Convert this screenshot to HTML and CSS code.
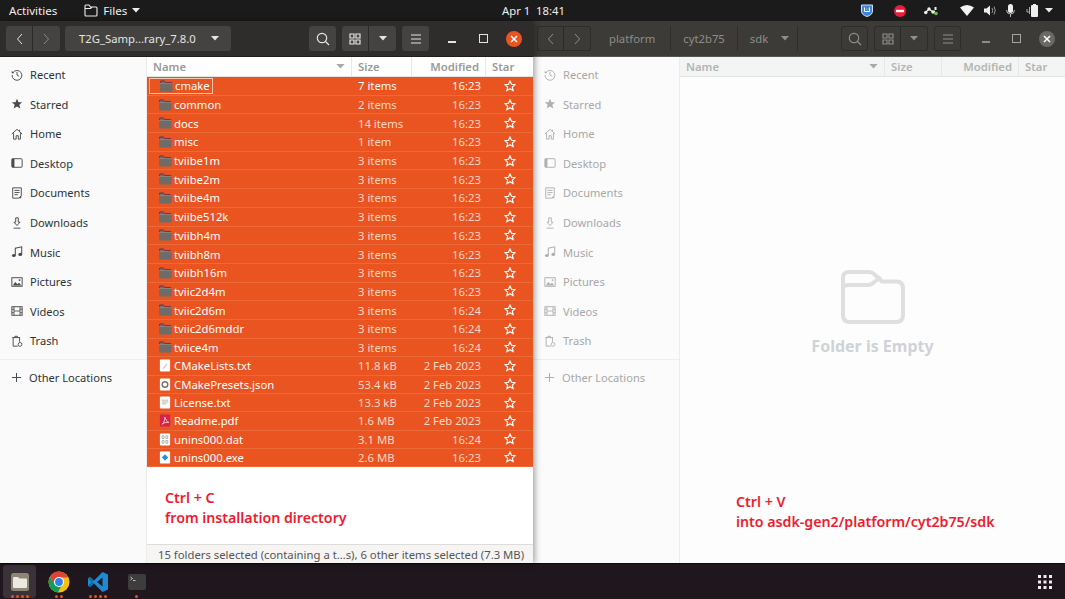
FILE: index.html
```html
<!DOCTYPE html>
<html lang="en">
<head>
  <meta charset="UTF-8" />
  <title>Files</title>
  <link rel="stylesheet" href="styles.css">
</head>
<body>
  <svg class="defs" width="0" height="0">
    <symbol id="i-folder" viewBox="0 0 14 14">
      <path d="M1 2.500q0-1 1-1h3.500l1.500 1.500h5q1.500 0 1.500 1v7.500q0 1-1 1H2q-1 0-1-1z" fill="#6f6b67"/>
      <path d="M1.500 4V2.500q0-.5.5-.5h3.300L6.800 3.500h6" fill="none" stroke="#8a2a3a"/>
      <rect x="1" y="4" width="12.500" height="1" fill="#85817d"/>
    </symbol>
    <symbol id="i-star" viewBox="0 0 12 12">
      <path d="M6 1l1.500 3.300 3.500.4-2.600 2.400.7 3.500L6 8.800 2.900 10.600l.7-3.500L1 4.700l3.500-.4z" fill="none" stroke="#fff" stroke-width="1.200"/>
    </symbol>
    <symbol id="i-caret" viewBox="0 0 10 6">
      <path d="M0 0h10L5 5.500z" fill="currentColor"/>
    </symbol>
    <symbol id="i-search" viewBox="0 0 14 14">
      <circle cx="6" cy="6" r="4.700" fill="none" stroke="currentColor" stroke-width="1.200"/>
      <path d="M9.500 9.500L13 13" stroke="currentColor" stroke-width="1.300"/>
    </symbol>
    <symbol id="i-grid" viewBox="0 0 12 12">
      <path d="M1 1h4v4H1zM7 1h4v4H7zM1 7h4v4H1zM7 7h4v4H7z" fill="none" stroke="currentColor" stroke-width="1.200"/>
    </symbol>
    <symbol id="i-menu" viewBox="0 0 12 10">
      <path d="M1 1h10M1 5h10M1 9h10" stroke="currentColor" stroke-width="1.100"/>
    </symbol>
    <symbol id="i-recent" viewBox="0 0 14 14">
      <path d="M2.300 4.200A5.700 5.700 0 1 1 1.300 7M7 3.500V7l2.500 1.500" fill="none" stroke="currentColor" stroke-width="1.100"/>
      <path d="M.8 2v3h3z" fill="currentColor"/>
    </symbol>
    <symbol id="i-starred" viewBox="0 0 14 14">
      <path d="M7 1l1.800 4h4.200l-3.300 2.800 1.200 4.400L7 9.800l-3.900 2.400 1.200-4.400L1 5h4.200z" fill="currentColor"/>
    </symbol>
    <symbol id="i-home" viewBox="0 0 14 14">
      <path d="M1 7l6-5.500L13 7M3 6v7h3V9h2.500v4H11V6M10 2v2" fill="none" stroke="currentColor" stroke-width="1.100"/>
    </symbol>
    <symbol id="i-desktop" viewBox="0 0 14 14">
      <rect x="1" y="2" width="12" height="10" rx="1" fill="none" stroke="currentColor" stroke-width="1.100"/>
      <rect x="1" y="2" width="3" height="10" fill="currentColor"/>
    </symbol>
    <symbol id="i-documents" viewBox="0 0 14 14">
      <path d="M2 1h10v9l-3 3H2zM4 4h6M4 6.500h6M4 9h4" fill="none" stroke="currentColor" stroke-width="1.100"/>
      <path d="M12 10v3H9z" fill="currentColor"/>
    </symbol>
    <symbol id="i-downloads" viewBox="0 0 14 14">
      <path d="M5.500 1h3v5h2L7 10 3.500 6h2zM3 13h8" fill="none" stroke="currentColor" stroke-width="1.100"/>
    </symbol>
    <symbol id="i-music" viewBox="0 0 14 14">
      <path d="M5 11V2.500L12.500 1v8.500" fill="none" stroke="currentColor" stroke-width="1.200"/>
      <ellipse cx="3.300" cy="11" rx="2.200" ry="1.800" fill="currentColor"/>
      <ellipse cx="10.800" cy="9.800" rx="2.200" ry="1.800" fill="currentColor"/>
    </symbol>
    <symbol id="i-pictures" viewBox="0 0 14 14">
      <rect x="1" y="2" width="12" height="10" fill="none" stroke="currentColor" stroke-width="1.100"/>
      <path d="M2 11l3-4 2.500 2.500L9.500 8 12 11z" fill="currentColor"/>
      <circle cx="10" cy="4.800" r="1.100" fill="currentColor"/>
    </symbol>
    <symbol id="i-videos" viewBox="0 0 14 14">
      <rect x="1" y="2" width="12" height="10" fill="none" stroke="currentColor" stroke-width="1.100"/>
      <path d="M3.500 2v10M10.500 2v10M1 5h2.500M1 9h2.500M10.500 5H13M10.500 9H13M3.500 7h7" fill="none" stroke="currentColor" stroke-width="1"/>
    </symbol>
    <symbol id="i-trash" viewBox="0 0 14 14">
      <path d="M1.500 3h9M4.500 3V1.500h3V3M2.500 3v10H8M10 3v5" fill="none" stroke="currentColor" stroke-width="1.100"/>
      <circle cx="10.500" cy="11" r="2.200" fill="none" stroke="currentColor"/>
    </symbol>
    <symbol id="i-plus" viewBox="0 0 12 12">
      <path d="M6 1v10M1 6h10" stroke="currentColor" stroke-width="1.100"/>
    </symbol>
    <symbol id="i-file" viewBox="0 0 12 14">
      <rect x=".5" y=".5" width="11" height="13" rx="1" fill="#fff"/>
      <path d="M3.500 10l4-5 1 1-4 5z" fill="#cfc9c4"/>
    </symbol>
    <symbol id="i-json" viewBox="0 0 12 14">
      <rect x=".5" y=".5" width="11" height="13" rx="1" fill="#fff"/>
      <circle cx="6" cy="7" r="3" fill="none" stroke="#77736f" stroke-width="1.600"/>
    </symbol>
    <symbol id="i-txt" viewBox="0 0 12 14">
      <rect x=".5" y=".5" width="11" height="13" rx="1" fill="#fff"/>
      <path d="M2.500 4.500h7M2.500 6.500h7M2.500 8.500h5" stroke="#b5b0ac"/>
    </symbol>
    <symbol id="i-pdf" viewBox="0 0 12 14">
      <rect x=".5" y=".5" width="11" height="13" rx="1" fill="#d5234a"/>
      <path d="M3 11c2-2 3-5 2.800-7.500C7 6 8 8.500 10 9c-2.500-.3-5 .3-7 2z" fill="none" stroke="#fff" stroke-width=".8"/>
    </symbol>
    <symbol id="i-dat" viewBox="0 0 12 14">
      <rect x=".5" y=".5" width="11" height="13" rx="1" fill="#fff"/>
      <path d="M3 3h2v3H3zM7 3h2v3H7zM3 8h2v3H3zM7 8h2v3H7z" fill="none" stroke="#aaa59f" stroke-width=".9"/>
    </symbol>
    <symbol id="i-exe" viewBox="0 0 12 14">
      <rect x=".5" y=".5" width="11" height="13" rx="1" fill="#fff"/>
      <path d="M6 3.500L9.500 7 6 10.500 2.500 7z" fill="#2a8fdc"/>
    </symbol>
  </svg>

  <header class="topbar">
    <span class="top-activities">Activities</span>
    <span class="top-app">
      <svg width="14" height="13" viewBox="0 0 14 13"><path d="M1 3V2q0-1 1-1h3l1.500 2H12q1 0 1 1v7q0 1-1 1H2q-1 0-1-1zM1 4.500h5.500L8 3" fill="none" stroke="#eee" stroke-width="1.100"/></svg>
      Files
      <svg class="caret-sm" width="8" height="5"><use href="#i-caret"/></svg>
    </span>
    <span class="top-clock">Apr 1&nbsp; 18:41</span>
    <div class="tray">
      <svg class="tray-shield" width="12" height="13" viewBox="0 0 12 13"><path d="M.5 1h11v6q0 4-5.500 5.500Q.5 11 .5 7z" fill="#3f86d8" stroke="#cfe0f5"/><path d="M3.500 3.500v4h5v-4M5 5h.5M6.800 5h.5" fill="none" stroke="#fff"/></svg>
      <svg class="tray-stop" width="12" height="12" viewBox="0 0 12 12"><circle cx="6" cy="6" r="6" fill="#ed1c3a"/><rect x="2" y="4.800" width="8" height="2.400" fill="#fff"/></svg>
      <svg class="tray-net" width="14" height="10" viewBox="0 0 14 10"><path d="M1 7l4-4 4 3 2-1" fill="none" stroke="#eee" stroke-width="1.300"/><circle cx="1.800" cy="6.500" r="1.700" fill="#eee"/><circle cx="5" cy="3" r="1.700" fill="#eee"/><circle cx="9" cy="6" r="1.700" fill="#eee"/><circle cx="12" cy="7.500" r="1.800" fill="#6cbf4b"/><rect x="10.500" y="1" width="2" height="3" fill="#eee"/></svg>
      <svg class="tray-wifi" width="14" height="11" viewBox="0 0 14 11"><path d="M0 2.500Q7-2.500 14 2.500L7 11z" fill="#f4f4f4"/></svg>
      <svg class="tray-vol" width="13" height="11" viewBox="0 0 13 11"><path d="M0 3.500h2.500L6 .5v10L2.500 7.500H0z" fill="#eee"/><path d="M8 3q1.500 2.500 0 5M10 1.500q2.500 4 0 8" fill="none" stroke="#999" stroke-width="1"/></svg>
      <svg class="tray-mic" width="9" height="13" viewBox="0 0 9 13"><rect x="2" y="0" width="5" height="9" rx="2.500" fill="#eee"/><path d="M.5 6q0 4 4 4t4-4M4.500 10v3" fill="none" stroke="#bbb"/></svg>
      <svg class="tray-batt" width="13" height="13" viewBox="0 0 13 13"><rect x="5" y="1" width="7" height="12" rx="1" fill="#eee"/><rect x="7" y="0" width="3" height="1" fill="#eee"/><path d="M3.500 3v7M1 5v3h2" fill="none" stroke="#aaa"/></svg>
      <svg class="caret-sm" width="8" height="5"><use href="#i-caret"/></svg>
    </div>
  </header>

  <main class="desktop">
    <section class="window window-active">
      <div class="titlebar">
        <div class="btn-group nav-group">
          <button class="tbtn"><svg width="7" height="12" viewBox="0 0 7 12"><path d="M6 1L1.500 6 6 11" fill="none" stroke="currentColor"/></svg></button>
          <button class="tbtn tbtn-dim"><svg width="7" height="12" viewBox="0 0 7 12"><path d="M1 1l4.500 5L1 11" fill="none" stroke="currentColor"/></svg></button>
        </div>
        <div class="path-btn">
          <span>T2G_Samp...rary_7.8.0</span>
          <svg width="8" height="5"><use href="#i-caret"/></svg>
        </div>
        <div class="tools">
          <button class="tbtn"><svg width="14" height="14"><use href="#i-search"/></svg></button>
          <div class="btn-group">
            <button class="tbtn"><svg width="12" height="12"><use href="#i-grid"/></svg></button>
            <button class="tbtn"><svg width="8" height="5"><use href="#i-caret"/></svg></button>
          </div>
          <button class="tbtn"><svg width="12" height="10"><use href="#i-menu"/></svg></button>
        </div>
        <div class="win-controls">
          <span class="wc-min"></span>
          <span class="wc-max"></span>
          <span class="wc-close"><svg width="8" height="8" viewBox="0 0 8 8"><path d="M1 1l6 6M7 1L1 7" stroke="#fff" stroke-width="1.500"/></svg></span>
        </div>
      </div>
      <div class="content">
        <nav class="sidebar">
          <a class="side-item"><svg><use href="#i-recent"/></svg>Recent</a>
          <a class="side-item"><svg><use href="#i-starred"/></svg>Starred</a>
          <a class="side-item"><svg><use href="#i-home"/></svg>Home</a>
          <a class="side-item"><svg><use href="#i-desktop"/></svg>Desktop</a>
          <a class="side-item"><svg><use href="#i-documents"/></svg>Documents</a>
          <a class="side-item"><svg><use href="#i-downloads"/></svg>Downloads</a>
          <a class="side-item"><svg><use href="#i-music"/></svg>Music</a>
          <a class="side-item"><svg><use href="#i-pictures"/></svg>Pictures</a>
          <a class="side-item"><svg><use href="#i-videos"/></svg>Videos</a>
          <a class="side-item"><svg><use href="#i-trash"/></svg>Trash</a>
          <div class="side-sep"></div>
          <a class="side-item side-other"><svg><use href="#i-plus"/></svg>Other Locations</a>
        </nav>
        <div class="files">
          <div class="list-head">
            <span class="col-name">Name<svg width="9" height="5"><use href="#i-caret"/></svg></span>
            <span class="col-size">Size</span>
            <span class="col-mod">Modified</span>
            <span class="col-star">Star</span>
          </div>
          <div class="rows">
            <div class="row row-folder row-focus"><span class="cell-name"><span class="focus-box"><svg><use href="#i-folder"/></svg>cmake</span></span><span class="cell-size">7 items</span><span class="cell-mod">16:23</span><svg class="star"><use href="#i-star"/></svg></div>
            <div class="row row-folder"><span class="cell-name"><svg><use href="#i-folder"/></svg>common</span><span class="cell-size">2 items</span><span class="cell-mod">16:23</span><svg class="star"><use href="#i-star"/></svg></div>
            <div class="row row-folder"><span class="cell-name"><svg><use href="#i-folder"/></svg>docs</span><span class="cell-size">14 items</span><span class="cell-mod">16:23</span><svg class="star"><use href="#i-star"/></svg></div>
            <div class="row row-folder"><span class="cell-name"><svg><use href="#i-folder"/></svg>misc</span><span class="cell-size">1 item</span><span class="cell-mod">16:23</span><svg class="star"><use href="#i-star"/></svg></div>
            <div class="row row-folder"><span class="cell-name"><svg><use href="#i-folder"/></svg>tviibe1m</span><span class="cell-size">3 items</span><span class="cell-mod">16:23</span><svg class="star"><use href="#i-star"/></svg></div>
            <div class="row row-folder"><span class="cell-name"><svg><use href="#i-folder"/></svg>tviibe2m</span><span class="cell-size">3 items</span><span class="cell-mod">16:23</span><svg class="star"><use href="#i-star"/></svg></div>
            <div class="row row-folder"><span class="cell-name"><svg><use href="#i-folder"/></svg>tviibe4m</span><span class="cell-size">3 items</span><span class="cell-mod">16:23</span><svg class="star"><use href="#i-star"/></svg></div>
            <div class="row row-folder"><span class="cell-name"><svg><use href="#i-folder"/></svg>tviibe512k</span><span class="cell-size">3 items</span><span class="cell-mod">16:23</span><svg class="star"><use href="#i-star"/></svg></div>
            <div class="row row-folder"><span class="cell-name"><svg><use href="#i-folder"/></svg>tviibh4m</span><span class="cell-size">3 items</span><span class="cell-mod">16:23</span><svg class="star"><use href="#i-star"/></svg></div>
            <div class="row row-folder"><span class="cell-name"><svg><use href="#i-folder"/></svg>tviibh8m</span><span class="cell-size">3 items</span><span class="cell-mod">16:23</span><svg class="star"><use href="#i-star"/></svg></div>
            <div class="row row-folder"><span class="cell-name"><svg><use href="#i-folder"/></svg>tviibh16m</span><span class="cell-size">3 items</span><span class="cell-mod">16:23</span><svg class="star"><use href="#i-star"/></svg></div>
            <div class="row row-folder"><span class="cell-name"><svg><use href="#i-folder"/></svg>tviic2d4m</span><span class="cell-size">3 items</span><span class="cell-mod">16:23</span><svg class="star"><use href="#i-star"/></svg></div>
            <div class="row row-folder"><span class="cell-name"><svg><use href="#i-folder"/></svg>tviic2d6m</span><span class="cell-size">3 items</span><span class="cell-mod">16:24</span><svg class="star"><use href="#i-star"/></svg></div>
            <div class="row row-folder"><span class="cell-name"><svg><use href="#i-folder"/></svg>tviic2d6mddr</span><span class="cell-size">3 items</span><span class="cell-mod">16:24</span><svg class="star"><use href="#i-star"/></svg></div>
            <div class="row row-folder"><span class="cell-name"><svg><use href="#i-folder"/></svg>tviice4m</span><span class="cell-size">3 items</span><span class="cell-mod">16:24</span><svg class="star"><use href="#i-star"/></svg></div>
            <div class="row"><span class="cell-name"><svg class="doc"><use href="#i-file"/></svg>CMakeLists.txt</span><span class="cell-size">11.8 kB</span><span class="cell-mod">2 Feb 2023</span><svg class="star"><use href="#i-star"/></svg></div>
            <div class="row"><span class="cell-name"><svg class="doc"><use href="#i-json"/></svg>CMakePresets.json</span><span class="cell-size">53.4 kB</span><span class="cell-mod">2 Feb 2023</span><svg class="star"><use href="#i-star"/></svg></div>
            <div class="row"><span class="cell-name"><svg class="doc"><use href="#i-txt"/></svg>License.txt</span><span class="cell-size">13.3 kB</span><span class="cell-mod">2 Feb 2023</span><svg class="star"><use href="#i-star"/></svg></div>
            <div class="row"><span class="cell-name"><svg class="doc"><use href="#i-pdf"/></svg>Readme.pdf</span><span class="cell-size">1.6 MB</span><span class="cell-mod">2 Feb 2023</span><svg class="star"><use href="#i-star"/></svg></div>
            <div class="row"><span class="cell-name"><svg class="doc"><use href="#i-dat"/></svg>unins000.dat</span><span class="cell-size">3.1 MB</span><span class="cell-mod">16:24</span><svg class="star"><use href="#i-star"/></svg></div>
            <div class="row"><span class="cell-name"><svg class="doc"><use href="#i-exe"/></svg>unins000.exe</span><span class="cell-size">2.6 MB</span><span class="cell-mod">16:23</span><svg class="star"><use href="#i-star"/></svg></div>
          </div>
          <p class="note note-copy">Ctrl + C<br>from installation directory</p>
          <div class="statusbar">15 folders selected (containing a t…s), 6 other items selected (7.3 MB)</div>
        </div>
      </div>
    </section>

    <section class="window window-back">
      <div class="titlebar">
        <div class="btn-group nav-group">
          <button class="tbtn"><svg width="7" height="12" viewBox="0 0 7 12"><path d="M6 1L1.500 6 6 11" fill="none" stroke="currentColor"/></svg></button>
          <button class="tbtn tbtn-dim"><svg width="7" height="12" viewBox="0 0 7 12"><path d="M1 1l4.500 5L1 11" fill="none" stroke="currentColor"/></svg></button>
        </div>
        <div class="crumbs">
          <span class="crumb crumb-first">platform</span>
          <span class="crumb">cyt2b75</span>
          <span class="crumb crumb-last">sdk<svg width="8" height="5"><use href="#i-caret"/></svg></span>
        </div>
        <div class="tools">
          <button class="tbtn"><svg width="14" height="14"><use href="#i-search"/></svg></button>
          <div class="btn-group">
            <button class="tbtn"><svg width="12" height="12"><use href="#i-grid"/></svg></button>
            <button class="tbtn"><svg width="8" height="5"><use href="#i-caret"/></svg></button>
          </div>
          <button class="tbtn"><svg width="12" height="10"><use href="#i-menu"/></svg></button>
        </div>
        <div class="win-controls">
          <span class="wc-min"></span>
          <span class="wc-max"></span>
          <span class="wc-close"><svg width="8" height="8" viewBox="0 0 8 8"><path d="M1 1l6 6M7 1L1 7" stroke="#fff" stroke-width="1.500"/></svg></span>
        </div>
      </div>
      <div class="content">
        <nav class="sidebar">
          <a class="side-item"><svg><use href="#i-recent"/></svg>Recent</a>
          <a class="side-item"><svg><use href="#i-starred"/></svg>Starred</a>
          <a class="side-item"><svg><use href="#i-home"/></svg>Home</a>
          <a class="side-item"><svg><use href="#i-desktop"/></svg>Desktop</a>
          <a class="side-item"><svg><use href="#i-documents"/></svg>Documents</a>
          <a class="side-item"><svg><use href="#i-downloads"/></svg>Downloads</a>
          <a class="side-item"><svg><use href="#i-music"/></svg>Music</a>
          <a class="side-item"><svg><use href="#i-pictures"/></svg>Pictures</a>
          <a class="side-item"><svg><use href="#i-videos"/></svg>Videos</a>
          <a class="side-item"><svg><use href="#i-trash"/></svg>Trash</a>
          <div class="side-sep"></div>
          <a class="side-item side-other"><svg><use href="#i-plus"/></svg>Other Locations</a>
        </nav>
        <div class="files">
          <div class="list-head">
            <span class="col-name">Name<svg width="9" height="5"><use href="#i-caret"/></svg></span>
            <span class="col-size">Size</span>
            <span class="col-mod">Modified</span>
            <span class="col-star">Star</span>
          </div>
          <div class="empty">
            <svg width="64" height="56" viewBox="0 0 64 56"><path d="M2 20V9q0-6 6-6h20q3 0 5 2l8 7.500h14q7 0 7 7V46q0 7-7 7H9q-7 0-7-7V20q0-4 5-4h20q3 0 5-2l8-6" fill="none" stroke="#dfdfdf" stroke-width="4"/></svg>
            <strong>Folder is Empty</strong>
          </div>
          <p class="note note-paste">Ctrl + V<br>into asdk-gen2/platform/cyt2b75/sdk</p>
        </div>
      </div>
    </section>
  </main>

  <footer class="dock">
    <div class="dock-item dock-active">
      <svg width="18" height="18" viewBox="0 0 18 18"><rect width="18" height="18" rx="2.500" fill="#8d8674"/><path d="M2 5q0-1 1-1h4l1.500 1.500H15q1 0 1 1V14q0 1-1 1H3q-1 0-1-1z" fill="#ebe9e1"/></svg>
      <span class="dots"><i></i><i></i><i></i><i></i></span>
    </div>
    <div class="dock-item">
      <svg width="22" height="22" viewBox="0 0 22 22"><circle cx="11" cy="11" r="10.500" fill="#f4c20d"/><path d="M11 .5A10.500 10.500 0 0 0 2 5.700L6.500 13.500 11 6.500h9A10.500 10.500 0 0 0 11 .5z" fill="#db4437"/><path d="M2 5.700A10.500 10.500 0 0 0 9.800 21.400L14 14l-7.500-.5z" fill="#0f9d58"/><circle cx="11" cy="11" r="5" fill="#fff"/><circle cx="11" cy="11" r="3.900" fill="#2f7fed"/></svg>
      <span class="dots"><i></i><i></i></span>
    </div>
    <div class="dock-item">
      <svg width="20" height="20" viewBox="0 0 20 20"><path d="M14.500 0L20 2.500v15L14.500 20 6 11.500 2 15l-2-1.200V6.200L2 5l4 3.500z" fill="#1f8ad2"/><path d="M14.500 5.500L9 10l5.500 4.500z" fill="#1f1a24"/><path d="M0 6.200L2 5l4 3.500-2 1.700zM0 13.800L2 15l4-3.500-2-1.700z" fill="#0f6aa8"/></svg>
      <span class="dots"><i></i><i></i><i></i><i></i></span>
    </div>
    <div class="dock-item">
      <svg width="18" height="16" viewBox="0 0 18 16"><rect width="18" height="16" rx="2" fill="#3d3d3d"/><path d="M2.500 3l2 1.500-2 1.500M5 6.500h2.500" fill="none" stroke="#ddd" stroke-width=".8"/></svg>
      <span class="dots"><i></i></span>
    </div>
    <svg class="dock-apps" width="14" height="14" viewBox="0 0 14 14"><path d="M0 0h3v3H0zM5.500 0h3v3h-3zM11 0h3v3h-3zM0 5.500h3v3H0zM5.500 5.500h3v3h-3zM11 5.500h3v3h-3zM0 11h3v3H0zM5.500 11h3v3h-3zM11 11h3v3h-3z" fill="#eee"/></svg>
  </footer>
</body>
</html>
```

FILE: styles.css
```css
* {
  box-sizing: border-box;
}

html, body {
  height: 100%;
}

body {
  margin: 0;
  display: flex;
  flex-direction: column;
  overflow: hidden;
  font-family: "Noto Sans", sans-serif;
  font-size: 11.3px;
  background-color: #1f161e;
}

.defs {
  position: absolute;
}

button {
  font: inherit;
}

/* top panel */
.topbar {
  height: 21px;
  flex: none;
  display: flex;
  align-items: center;
  position: relative;
  padding: 0 12px 0 9px;
  background-color: #1b1b1b;
  color: #eee;
  font-size: 11.600px;
}

.top-activities {
  margin-right: 27px;
}

.top-app {
  display: flex;
  align-items: center;
  gap: 5px;
}

.top-clock {
  position: absolute;
  left: 502px;
  font-size: 11.300px;
}

.caret-sm {
  color: #eee;
}

.tray {
  margin-left: auto;
  display: flex;
  align-items: center;
}

.tray-stop {
  margin-left: 21px;
}

.tray-net {
  margin-left: 18px;
}

.tray-wifi {
  margin-left: 22px;
}

.tray-vol {
  margin-left: 10px;
}

.tray-mic {
  margin-left: 8.500px;
}

.tray-batt {
  margin-left: 11.500px;
}

.tray .caret-sm {
  margin-left: 6px;
}

/* windows */
.desktop {
  flex: 1;
  display: flex;
  min-height: 0;
}

.window {
  display: flex;
  flex-direction: column;
  position: relative;
  min-width: 0;
}

.window-active {
  width: 533px;
  flex: none;
  z-index: 2;
  box-shadow: 2px 0 6px rgba(0, 0, 0, 0.35);
}

.window-back {
  flex: 1;
  --side-text: #a8a8a8;
}

.titlebar {
  height: 36px;
  flex: none;
  display: flex;
  align-items: center;
  padding: 0 6px;
  border-bottom: 1px solid #1f1e1d;
  background-color: #2e2d2b;
}

.window-back .titlebar {
  padding: 0 4px;
  background-color: #3c3b38;
  border-bottom-color: #555;
}

.tbtn {
  height: 25px;
  width: 27px;
  flex: none;
  padding: 0;
  border: none;
  border-radius: 3px;
  display: flex;
  align-items: center;
  justify-content: center;
  background-color: #444341;
  color: #e4e4e2;
}

.tbtn-dim {
  color: #8a8987;
}

.window-back .tbtn {
  background-color: transparent;
  color: #8e8d8a;
  border: 1px solid #2e2d2b;
}

.btn-group {
  display: flex;
  flex: none;
}

.btn-group .tbtn:first-child {
  border-radius: 3px 0 0 3px;
  border-right: 1px solid #2a2928;
}

.btn-group .tbtn:last-child {
  border-radius: 0 3px 3px 0;
}

.window-back .btn-group .tbtn:last-child {
  border-left: none;
}

.path-btn {
  width: 166px;
  height: 25px;
  flex: none;
  margin-left: 5px;
  padding: 0 12px 0 14px;
  display: flex;
  align-items: center;
  justify-content: space-between;
  border-radius: 3px;
  background-color: #444341;
  color: #e4e4e2;
}

.crumbs {
  display: flex;
  flex: none;
  align-items: center;
  height: 25px;
  margin-left: 6px;
  color: #8e8d8a;
}

.crumb {
  height: 100%;
  display: flex;
  align-items: center;
  padding: 0 12px;
  border-right: 1px solid #2e2d2b;
}

.crumb-first {
  padding-right: 15px;
}

.crumb-last {
  gap: 13px;
  padding-right: 8px;
}

.tools {
  display: flex;
  flex: none;
  gap: 6px;
  margin-left: 78px;
}

.window-back .tools {
  margin-left: 43px;
}

.win-controls {
  display: flex;
  flex: none;
  align-items: center;
  margin-left: 7.500px;
}

.window-back .win-controls {
  margin-left: 9px;
}

.win-controls span {
  width: 31px;
  display: flex;
  justify-content: center;
}

.wc-min::before {
  content: "";
  width: 8px;
  height: 2px;
  margin-top: 6px;
  background-color: #e4e4e2;
}

.wc-max::before {
  content: "";
  width: 7px;
  height: 7px;
  border: 1.500px solid #e4e4e2;
}

.window-back .wc-min::before {
  background-color: #8e8d8a;
}

.window-back .wc-max::before {
  border-color: #a5a4a1;
}

.win-controls .wc-close {
  width: 16px;
  height: 16px;
  margin-left: 7px;
  border-radius: 50%;
  align-items: center;
  background-color: #e95420;
}

.window-back .wc-close {
  background-color: #6a6966;
}

.content {
  flex: 1;
  display: flex;
  min-height: 0;
}

/* sidebar */
.sidebar {
  width: 147px;
  flex: none;
  padding-top: 3px;
  font-size: 11.100px;
  background-color: #fafafa;
  border-right: 1px solid #ececec;
}

.window-back .sidebar {
  background-color: #fbfbfb;
}

.side-item {
  height: 29.560px;
  display: flex;
  align-items: center;
  gap: 7px;
  padding-left: 11px;
  color: #2e3436;
}

.window-back .side-item {
  color: var(--side-text);
}

.side-item svg {
  width: 12px;
  height: 12px;
  flex: none;
  color: #4a4a4a;
}

.window-back .side-item svg {
  color: #b0b0b0;
}

.side-sep {
  height: 1px;
  margin: 4px 0 3px;
  background-color: #eeeeee;
}

.side-other {
  height: 28px;
}

.side-other svg {
  width: 11px;
  height: 11px;
}

/* file list */
.files {
  flex: 1;
  min-width: 0;
  display: flex;
  flex-direction: column;
  background-color: #fff;
  position: relative;
}

.window-back .files {
  background-color: #fdfdfd;
}

.list-head {
  height: 20px;
  flex: none;
  display: grid;
  grid-template-columns: 205px 60px 74px 1fr;
  align-items: stretch;
  font-weight: 600;
  color: #9a9a96;
  border-bottom: 1px solid #e3e3e1;
}

.window-back .list-head {
  grid-template-columns: 205px 57px 77px 1fr;
  background-color: #f3f4f4;
  color: #b4b4b2;
}

.list-head span {
  display: flex;
  align-items: center;
  padding: 0 6px;
  border-right: 1px solid #e8e8e6;
}

.col-name {
  justify-content: space-between;
}

.col-name svg {
  color: #a9a9a6;
}

.col-mod {
  justify-content: flex-end;
}

.list-head .col-star {
  border-right: none;
}

.row {
  height: 18.300px;
  display: grid;
  grid-template-columns: 205px 60px 74px 1fr;
  align-items: center;
  background-color: #e95420;
  color: #fbd9c9;
  border-bottom: 1px solid #ec6a3a;
}

.row-folder {
  height: 18.700px;
}

.row-focus {
  color: #fff;
}

.cell-name {
  display: flex;
  align-items: center;
  gap: 2px;
  padding-left: 11px;
  color: #fff;
}

.cell-name svg {
  width: 14px;
  height: 14px;
  flex: none;
}

.cell-name .doc {
  height: 13px;
}

.focus-box {
  display: flex;
  align-items: center;
  gap: 2px;
  height: 16px;
  margin-left: -9px;
  padding: 0 2px 0 9px;
  border: 1px solid #f7c6ae;
}

.cell-size {
  padding-left: 6px;
}

.cell-mod {
  padding-right: 5px;
  text-align: right;
}

.star {
  width: 12px;
  height: 12px;
  justify-self: center;
}

.note {
  margin: 0;
  position: absolute;
  font-weight: 600;
  font-size: 14.200px;
  line-height: 20px;
  color: #ee1c2e;
}

.note-copy {
  left: 18px;
  top: 431px;
}

.note-paste {
  left: 56px;
  top: 435px;
}

.statusbar {
  margin-top: auto;
  height: 19px;
  padding-left: 11px;
  display: flex;
  align-items: center;
  background-color: #f6f5f4;
  border-top: 1px solid #dcdcda;
  color: #555;
}

/* empty folder */
.empty {
  flex: 1;
  display: flex;
  flex-direction: column;
  align-items: center;
  padding-top: 192px;
  color: #cfd3d6;
}

.empty strong {
  margin-top: 10px;
  font-size: 16px;
}

/* dock */
.dock {
  height: 36px;
  flex: none;
  display: flex;
  align-items: center;
  padding-left: 3px;
  background-color: #1f161e;
  border-top: 1px solid #0d0a0d;
}

.dock-item {
  width: 33px;
  height: 33px;
  margin-right: 6px;
  display: flex;
  align-items: center;
  justify-content: center;
  position: relative;
  border-radius: 3px;
}

.dock-active {
  background-color: #3a3238;
}

.dots {
  position: absolute;
  bottom: 0;
  display: flex;
  gap: 2px;
}

.dots i {
  width: 3px;
  height: 3px;
  border-radius: 50%;
  background-color: #e95420;
}

.dock-apps {
  margin-left: auto;
  margin-right: 13px;
}
```
